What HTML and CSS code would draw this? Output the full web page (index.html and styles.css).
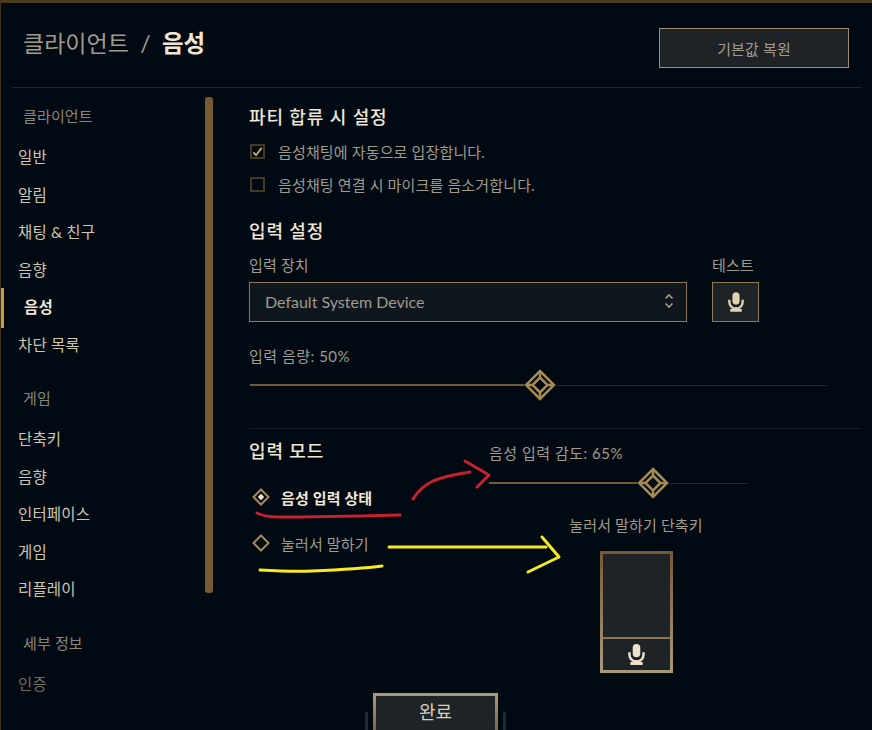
FILE: index.html
```html
<!DOCTYPE html>
<html lang="ko">
<head>
  <meta charset="utf-8">
  <title>클라이언트 / 음성</title>
  <link rel="stylesheet" href="styles.css">
</head>
<body>
  <svg class="defs" width="0" height="0">
    <symbol id="mic" viewBox="0 0 18 22">
      <rect x="5" y="0" width="8" height="14" rx="4" fill="currentColor"/>
      <path d="M1.500 8.500v2.500a7.500 7.500 0 0 0 15 0V8.500" fill="none" stroke="currentColor" stroke-width="2.600"/>
      <path d="M7.500 17h3v2.500h-3z M2.500 19h13v3h-13z" fill="currentColor"/>
    </symbol>
    <symbol id="thumb" viewBox="0 0 32 32">
      <path d="M16 2 30 16 16 30 2 16Z" fill="#010a13" stroke="#a58a55" stroke-width="2.500"/>
      <path d="M16 8.500 23.500 16 16 23.500 8.500 16Z" fill="none" stroke="#a58a55" stroke-width="2.500"/>
      <path d="M16 2V8.500M16 23.500V30M2 16H8.500M23.500 16H30" fill="none" stroke="#a58a55" stroke-width="2.500"/>
    </symbol>
  </svg>

  <div class="frame">
    <header class="header">
      <h1 class="title">클라이언트 <span class="slash">/</span> <b>음성</b></h1>
      <button class="btn-reset">기본값 복원</button>
    </header>

    <div class="main">
      <aside class="sidebar">
        <nav class="nav">
          <div class="nav-title">클라이언트</div>
          <a class="nav-item">일반</a>
          <a class="nav-item">알림</a>
          <a class="nav-item">채팅 &amp; 친구</a>
          <a class="nav-item">음향</a>
          <a class="nav-item active">음성</a>
          <a class="nav-item">차단 목록</a>
          <div class="nav-title gap">게임</div>
          <a class="nav-item">단축키</a>
          <a class="nav-item">음향</a>
          <a class="nav-item">인터페이스</a>
          <a class="nav-item">게임</a>
          <a class="nav-item">리플레이</a>
          <div class="nav-title gap">세부 정보</div>
          <a class="nav-item dim">인증</a>
        </nav>
        <div class="scrollbar"></div>
      </aside>

      <section class="content">
        <h2 class="section-title">파티 합류 시 설정</h2>
        <label class="check first">
          <span class="box">
            <svg width="12" height="12" viewBox="0 0 12 12"><path d="M1.500 6.500 4.500 9.500 10.500 1.500" fill="none" stroke="#c8aa6e" stroke-width="2"/></svg>
          </span>
          음성채팅에 자동으로 입장합니다.
        </label>
        <label class="check">
          <span class="box"></span>
          음성채팅 연결 시 마이크를 음소거합니다.
        </label>

        <h2 class="section-title second">입력 설정</h2>
        <div class="device-row">
          <div class="field">
            <div class="label">입력 장치</div>
            <div class="select">
              Default System Device
              <svg width="10" height="16" viewBox="0 0 10 16"><path d="M1.500 5.500 5 2l3.500 3.500M1.500 10.500 5 14l3.500-3.500" fill="none" stroke="#a09b8c" stroke-width="1.600"/></svg>
            </div>
          </div>
          <div class="field">
            <div class="label">테스트</div>
            <button class="btn-test"><svg width="16" height="20"><use href="#mic"/></svg></button>
          </div>
        </div>

        <div class="label volume spaced">입력 음량: 50%</div>
        <div class="slider wide">
          <div class="track-on half"></div>
          <svg class="knob" width="32" height="32"><use href="#thumb"/></svg>
          <div class="track-off"></div>
        </div>

        <div class="mode">
          <div class="mode-left">
            <h2 class="section-title">입력 모드</h2>
            <div class="radio selected">
              <svg width="18" height="18" viewBox="0 0 18 18"><path d="M9 1.500 16.500 9 9 16.500 1.500 9Z" fill="none" stroke="#a58a55" stroke-width="2"/><path d="M9 5.800 12.200 9 9 12.200 5.800 9Z" fill="#f0e6d2"/></svg>
              음성 입력 상태
            </div>
            <div class="radio">
              <svg width="18" height="18" viewBox="0 0 18 18"><path d="M9 1.500 16.500 9 9 16.500 1.500 9Z" fill="none" stroke="#a58a55" stroke-width="2"/></svg>
              눌러서 말하기
            </div>
          </div>
          <div class="mode-right">
            <div class="label spaced">음성 입력 감도: 65%</div>
            <div class="slider narrow">
              <div class="track-on sens"></div>
              <svg class="knob" width="32" height="32"><use href="#thumb"/></svg>
              <div class="track-off"></div>
            </div>
            <div class="hotkey">
              <div class="label">눌러서 말하기 단축키</div>
              <div class="hotkey-box">
                <div class="hotkey-top"></div>
                <div class="hotkey-bottom"><svg width="17" height="21"><use href="#mic"/></svg></div>
              </div>
            </div>
          </div>
        </div>
      </section>
    </div>

    <div class="footer">
      <span class="footer-line"></span>
      <button class="btn-done">완료</button>
      <span class="footer-line"></span>
    </div>

    <!-- red and yellow marks drawn over the screenshot -->
    <svg class="marks" width="872" height="730" viewBox="0 0 872 730">
      <g fill="none" stroke="#c8202c" stroke-width="3" stroke-linecap="round" stroke-linejoin="round">
        <path d="M257 513c6 3 12 4 20 4 40 0 82-1 123-2"/>
        <path d="M413 499c5-8 11-14 20-18 12-5 24-7 37-9"/>
        <path d="M465 461l24 14-12 12"/>
      </g>
      <g fill="none" stroke="#f7ea1f" stroke-width="3" stroke-linecap="round" stroke-linejoin="round">
        <path d="M260 570c17 1 35 2 52 1 24-1 48-2 70-5"/>
        <path d="M389 547h157"/>
        <path d="M542 537l17 20-31 15"/>
      </g>
    </svg>
  </div>
</body>
</html>
```

FILE: styles.css
```css
* {
  box-sizing: border-box;
}

html, body {
  margin: 0;
  height: 100%;
}

body {
  background: #010a13;
  color: #a09b8c;
  font-family: "Lato", "Noto Sans CJK KR", sans-serif;
  font-size: 15px;
  letter-spacing: 0.15px;
  overflow: hidden;
}

.defs {
  display: block;
}

.frame {
  position: relative;
  width: 872px;
  height: 730px;
  overflow: hidden;
  border-top: 3px solid #4a3c20;
  border-left: 1px solid #3c301a;
}

/* header */
.header {
  display: flex;
  justify-content: space-between;
  align-items: center;
  height: 85px;
  margin: 0 11px;
  padding: 0 12px 0 11px;
  border-bottom: 1px solid #1e282d;
}

.title {
  margin: 0 0 6px;
  font-size: 23px;
  font-weight: 400;
  letter-spacing: 0;
  color: #a09b8c;
}

.title b {
  color: #f0e6d2;
  font-size: 23.500px;
  font-weight: 700;
}

.slash {
  margin: 0 5.500px;
}

.btn-reset {
  width: 190px;
  height: 40px;
  margin-top: 6px;
  background: #1e2328;
  border: 1px solid #a09070;
  color: #a09b8c;
  font: inherit;
  letter-spacing: inherit;
}

/* sidebar */
.main {
  display: flex;
}

.sidebar {
  display: flex;
  flex: none;
  width: 248px;
}

.nav {
  width: 199px;
  margin-right: 5px;
  padding-top: 9px;
  border-right: 1px solid #030e17;
}

.nav-title {
  height: 38px;
  line-height: 38px;
  margin-bottom: 4px;
  padding-left: 22px;
  color: #8a8678;
}

.nav-title.gap {
  margin-top: 15px;
}

.nav-item {
  display: block;
  height: 37.5px;
  line-height: 37.5px;
  padding-left: 17px;
  font-size: 15.500px;
  color: #cdc6ae;
}

.nav-item.active {
  padding-left: 23px;
  color: #f0e6d2;
  font-weight: 700;
  position: relative;
}

.nav-item.active::before {
  content: "";
  position: absolute;
  left: 0;
  top: -1px;
  width: 3px;
  height: 40px;
  background: #c89b3c;
}

.nav-item.dim {
  color: #6f6c61;
}

.scrollbar {
  width: 8px;
  height: 496px;
  margin-top: 9px;
  border-radius: 3px;
  background: #785a32;
}

/* content */
.content {
  flex: 1;
  padding-top: 17px;
}

.section-title {
  margin: 0;
  height: 24px;
  line-height: 24px;
  font-size: 18px;
  font-weight: 500;
  letter-spacing: 0.9px;
  color: #f0e6d2;
}

.section-title.second {
  margin-top: 18px;
}

.check {
  display: flex;
  align-items: center;
  gap: 13px;
  height: 33px;
  padding-left: 1px;
}

.check.first {
  margin-top: 6px;
}

.box {
  display: flex;
  align-items: center;
  justify-content: center;
  width: 15px;
  height: 15px;
  border: 2px solid #463a22;
}

.device-row {
  display: flex;
  gap: 25px;
  margin-top: 12px;
}

.label {
  height: 20px;
  line-height: 20px;
}

.label.spaced {
  letter-spacing: 0.5px;
}

.field .label {
  margin-bottom: 7px;
}

.select {
  display: flex;
  align-items: center;
  justify-content: space-between;
  width: 438px;
  height: 40px;
  padding: 0 12px 2px 15px;
  background: #10161d;
  border: 1px solid #8f7c55;
  font-size: 16px;
  letter-spacing: 0;
}

.btn-test {
  display: flex;
  align-items: center;
  justify-content: center;
  width: 47px;
  height: 40px;
  padding: 0;
  background: #1e2328;
  border: 1px solid #8f7c55;
  color: #e0d4b0;
}

.volume {
  margin-top: 24px;
}

/* sliders */
.slider {
  display: flex;
  align-items: center;
  height: 32px;
}

.slider.wide {
  width: 577px;
  margin: 3px 0 0 1px;
}

.slider.narrow {
  width: 259px;
  margin-top: 4px;
}

.track-on {
  height: 2px;
  background: #6e5c34;
}

.track-on.half {
  width: 274px;
}

.track-on.sens {
  width: 148px;
}

.track-off {
  flex: 1;
  height: 1px;
  background: #1e2a32;
}

.knob {
  flex: none;
}

/* input mode */
.mode {
  display: flex;
  margin-top: 27px;
  border-top: 1px solid #141e26;
  margin-right: 10px;
}

.mode-left {
  width: 240px;
  padding-top: 10px;
}

.mode .section-title {
  margin-bottom: 11px;
}

.radio {
  display: flex;
  align-items: center;
  gap: 11px;
  height: 46px;
  padding-left: 3px;
}

.radio.selected {
  color: #f0e6d2;
  font-weight: 700;
}

.mode-right {
  padding-top: 14px;
}

.hotkey {
  display: flex;
  flex-direction: column;
  align-items: center;
  width: 294px;
  margin-top: 16px;
}

.hotkey .label {
  margin-bottom: 16px;
}

.hotkey-box {
  display: flex;
  flex-direction: column;
  width: 73px;
  height: 122px;
  background: #1e2328;
  border: 3px solid;
  border-image: linear-gradient(#785a32, #a8987a) 1;
}

.hotkey-top {
  flex: 1;
  border-bottom: 2px solid #8a7550;
}

.hotkey-bottom {
  display: flex;
  align-items: center;
  justify-content: center;
  height: 31px;
  color: #ece2cc;
}

/* footer button lies over the bottom of the page */
.footer {
  position: absolute;
  left: 364px;
  top: 690px;
  display: flex;
  gap: 5px;
  align-items: flex-start;
}

.footer-line {
  width: 3px;
  height: 30px;
  margin-top: 19px;
  background: #1e2a35;
}

.btn-done {
  width: 125px;
  height: 50px;
  padding: 0 0 14px;
  background: #1e2328;
  border: 3px solid;
  border-image: linear-gradient(#a8987a, #6e5c34) 1;
  color: #d8cfb8;
  font: inherit;
  font-size: 18px;
}

.marks {
  position: absolute;
  left: -1px;
  top: -3px;
  pointer-events: none;
}
```
